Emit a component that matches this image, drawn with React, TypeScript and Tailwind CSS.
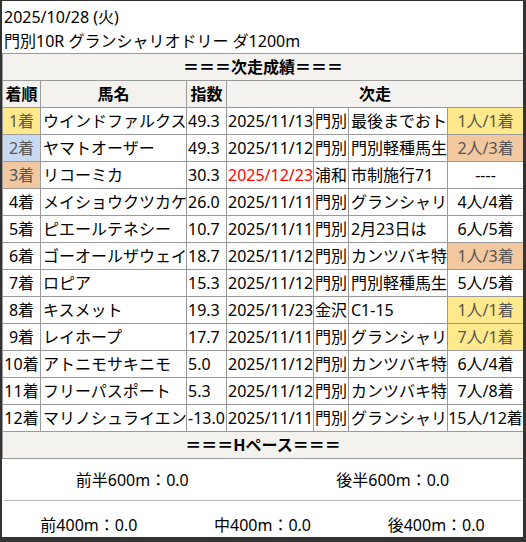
import React from "react";

type Row = {
  rank: number;
  name: string;
  idx: string;
  date: string;
  red?: boolean;
  venue: string;
  race: string;
  result: string;
  resBg?: string;
};

const rows: Row[] = [
  { rank: 1, name: "ウインドファルクス", idx: "49.3", date: "2025/11/13", venue: "門別", race: "最後までおト", result: "1人/1着", resBg: "y" },
  { rank: 2, name: "ヤマトオーザー", idx: "49.3", date: "2025/11/12", venue: "門別", race: "門別軽種馬生", result: "2人/3着", resBg: "p" },
  { rank: 3, name: "リコーミカ", idx: "30.3", date: "2025/12/23", red: true, venue: "浦和", race: "市制施行71", result: "----" },
  { rank: 4, name: "メイショウクツカケ", idx: "26.0", date: "2025/11/11", venue: "門別", race: "グランシャリ", result: "4人/4着" },
  { rank: 5, name: "ピエールテネシー", idx: "10.7", date: "2025/11/11", venue: "門別", race: "2月23日は", result: "6人/5着" },
  { rank: 6, name: "ゴーオールザウェイ", idx: "18.7", date: "2025/11/12", venue: "門別", race: "カンツバキ特", result: "1人/3着", resBg: "p" },
  { rank: 7, name: "ロピア", idx: "15.3", date: "2025/11/12", venue: "門別", race: "門別軽種馬生", result: "5人/5着" },
  { rank: 8, name: "キスメット", idx: "19.3", date: "2025/11/23", venue: "金沢", race: "C1-15", result: "1人/1着", resBg: "y" },
  { rank: 9, name: "レイホープ", idx: "17.7", date: "2025/11/11", venue: "門別", race: "グランシャリ", result: "7人/1着", resBg: "y" },
  { rank: 10, name: "アトニモサキニモ", idx: "5.0", date: "2025/11/12", venue: "門別", race: "カンツバキ特", result: "6人/4着" },
  { rank: 11, name: "フリーパスポート", idx: "5.3", date: "2025/11/12", venue: "門別", race: "カンツバキ特", result: "7人/8着" },
  { rank: 12, name: "マリノシュライエン", idx: "-13.0", date: "2025/11/11", venue: "門別", race: "グランシャリ", result: "15人/12着" },
];

const cell = "border border-[#9a9a9a] h-[27px] p-0 align-middle whitespace-nowrap overflow-hidden";

function rankClass(r: number) {
  if (r === 1) return "bg-[#ffe98c] text-[#555]";
  if (r === 2) return "bg-[#c8daf2] text-[#555]";
  if (r === 3) return "bg-[#f2c8a0] text-[#555]";
  return "";
}

function resClass(b?: string) {
  if (b === "y") return "bg-[#ffe98c] text-[#555]";
  if (b === "p") return "bg-[#f2c8a0] text-[#555]";
  return "";
}

export default function App() {
  return (
    <div
      className="w-[526px] h-[542px] bg-[#333] overflow-hidden pt-[1px] pl-[2px]"
      style={{ fontFamily: '"Noto Sans", "Noto Sans CJK JP", sans-serif' }}
    >
      <div className="w-[521px] h-[536px] bg-white overflow-hidden text-[16px] text-black leading-[24px]">
        <div className="h-[52px] pt-[4px] pl-[2px]">
          <div>2025/10/28 (火)</div>
          <div>門別10R グランシャリオドリー ダ1200m</div>
        </div>
        <table className="table-fixed border-collapse w-[521px]">
          <colgroup>
            <col className="w-[38px]" />
            <col className="w-[146px]" />
            <col className="w-[40px]" />
            <col className="w-[87px]" />
            <col className="w-[35px]" />
            <col className="w-[99px]" />
            <col className="w-[76px]" />
          </colgroup>
          <tbody>
            <tr>
              <td colSpan={7} className={`${cell} bg-[#f3f2ee] text-center font-bold`}>
                ＝＝＝次走成績＝＝＝
              </td>
            </tr>
            <tr className="bg-[#f3f2ee] font-bold">
              <td className={`${cell} text-center`}>着順</td>
              <td className={`${cell} text-center`}>馬名</td>
              <td className={`${cell} text-center`}>指数</td>
              <td colSpan={4} className={`${cell} text-center`}>次走</td>
            </tr>
            {rows.map((r) => (
              <tr key={r.rank}>
                <td className={`${cell} text-center ${rankClass(r.rank)}`}>{r.rank}着</td>
                <td className={`${cell} pl-[2px]`}>{r.name}</td>
                <td className={`${cell} pl-[1px]`}>{r.idx}</td>
                <td className={`${cell} pl-[1px] ${r.red ? "text-[#ff0000]" : ""}`}>{r.date}</td>
                <td className={`${cell} pl-[1px]`}>{r.venue}</td>
                <td className={`${cell} pl-[2px]`}>{r.race}</td>
                <td className={`${cell} text-center ${resClass(r.resBg)}`}>{r.result}</td>
              </tr>
            ))}
            <tr>
              <td colSpan={7} className={`${cell} bg-[#f3f2ee] text-center font-bold`}>
                ＝＝＝Hペース＝＝＝
              </td>
            </tr>
          </tbody>
        </table>
        <div className="flex h-[41px] items-center">
          <div className="flex-1 text-center">前半600m：0.0</div>
          <div className="flex-1 text-center">後半600m：0.0</div>
        </div>
        <div className="mx-[2px] border-t border-[#b5b5b5]" />
        <div className="flex pt-[12px]">
          <div className="flex-1 text-center">前400m：0.0</div>
          <div className="flex-1 text-center">中400m：0.0</div>
          <div className="flex-1 text-center">後400m：0.0</div>
        </div>
      </div>
    </div>
  );
}
